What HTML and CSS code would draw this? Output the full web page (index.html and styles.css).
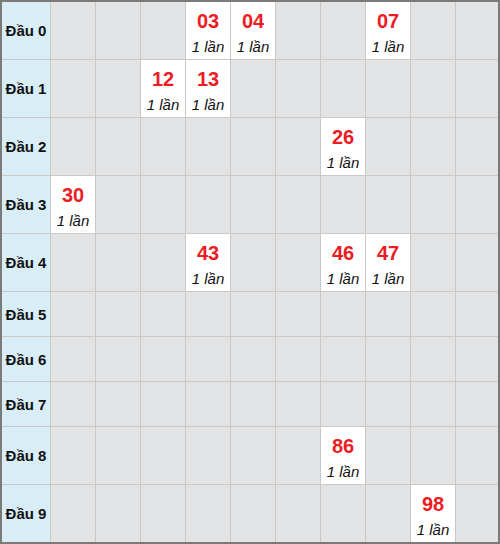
FILE: index.html
```html
<!DOCTYPE html>
<html lang="vi">
<head>
    <meta charset="UTF-8">
    <meta name="viewport" content="width=device-width, initial-scale=1.0">
    <title>Thống kê đầu lô</title>
    <link rel="stylesheet" href="styles.css">
</head>
<body>
    <div class="board">
        <div class="grid">
            <div class="head">Đầu 0</div>
            <div class="cell"></div><div class="cell"></div><div class="cell"></div>
            <div class="cell hit"><span class="num">03</span><span class="times">1 lần</span></div>
            <div class="cell hit"><span class="num">04</span><span class="times">1 lần</span></div>
            <div class="cell"></div><div class="cell"></div>
            <div class="cell hit"><span class="num">07</span><span class="times">1 lần</span></div>
            <div class="cell"></div><div class="cell"></div>

            <div class="head">Đầu 1</div>
            <div class="cell"></div><div class="cell"></div>
            <div class="cell hit"><span class="num">12</span><span class="times">1 lần</span></div>
            <div class="cell hit"><span class="num">13</span><span class="times">1 lần</span></div>
            <div class="cell"></div><div class="cell"></div><div class="cell"></div>
            <div class="cell"></div><div class="cell"></div><div class="cell"></div>

            <div class="head">Đầu 2</div>
            <div class="cell"></div><div class="cell"></div><div class="cell"></div>
            <div class="cell"></div><div class="cell"></div><div class="cell"></div>
            <div class="cell hit"><span class="num">26</span><span class="times">1 lần</span></div>
            <div class="cell"></div><div class="cell"></div><div class="cell"></div>

            <div class="head">Đầu 3</div>
            <div class="cell hit"><span class="num">30</span><span class="times">1 lần</span></div>
            <div class="cell"></div><div class="cell"></div><div class="cell"></div>
            <div class="cell"></div><div class="cell"></div><div class="cell"></div>
            <div class="cell"></div><div class="cell"></div><div class="cell"></div>

            <div class="head">Đầu 4</div>
            <div class="cell"></div><div class="cell"></div><div class="cell"></div>
            <div class="cell hit"><span class="num">43</span><span class="times">1 lần</span></div>
            <div class="cell"></div><div class="cell"></div>
            <div class="cell hit"><span class="num">46</span><span class="times">1 lần</span></div>
            <div class="cell hit"><span class="num">47</span><span class="times">1 lần</span></div>
            <div class="cell"></div><div class="cell"></div>

            <div class="head">Đầu 5</div>
            <div class="cell"></div><div class="cell"></div><div class="cell"></div>
            <div class="cell"></div><div class="cell"></div><div class="cell"></div>
            <div class="cell"></div><div class="cell"></div><div class="cell"></div>
            <div class="cell"></div>

            <div class="head">Đầu 6</div>
            <div class="cell"></div><div class="cell"></div><div class="cell"></div>
            <div class="cell"></div><div class="cell"></div><div class="cell"></div>
            <div class="cell"></div><div class="cell"></div><div class="cell"></div>
            <div class="cell"></div>

            <div class="head">Đầu 7</div>
            <div class="cell"></div><div class="cell"></div><div class="cell"></div>
            <div class="cell"></div><div class="cell"></div><div class="cell"></div>
            <div class="cell"></div><div class="cell"></div><div class="cell"></div>
            <div class="cell"></div>

            <div class="head">Đầu 8</div>
            <div class="cell"></div><div class="cell"></div><div class="cell"></div>
            <div class="cell"></div><div class="cell"></div><div class="cell"></div>
            <div class="cell hit"><span class="num">86</span><span class="times">1 lần</span></div>
            <div class="cell"></div><div class="cell"></div><div class="cell"></div>

            <div class="head">Đầu 9</div>
            <div class="cell"></div><div class="cell"></div><div class="cell"></div>
            <div class="cell"></div><div class="cell"></div><div class="cell"></div>
            <div class="cell"></div><div class="cell"></div>
            <div class="cell hit"><span class="num">98</span><span class="times">1 lần</span></div>
            <div class="cell"></div>
        </div>
    </div>
</body>
</html>
```

FILE: styles.css
```css
body {
    margin: 0;
    padding: 0;
    font-family: "Liberation Sans", Arial, sans-serif;
    background-color: #fff;
}

.board {
    width: 496px;
    border: 2px solid #7a7a7a;
}

.grid {
    display: grid;
    grid-template-columns: 48px repeat(9, 44px) 1fr;
    grid-template-rows: 57px 57px 57px 57px 57px 44px 44px 44px 57px 57px;
    gap: 1px;
    background-color: #c9c9c9;
}

.head {
    display: flex;
    align-items: center;
    justify-content: center;
    background-color: #d9edf7;
    font-size: 15px;
    font-weight: bold;
    color: #111;
}

.cell {
    background-color: #e2e3e5;
}

.hit {
    display: flex;
    flex-direction: column;
    align-items: center;
    padding-top: 7px;
    box-sizing: border-box;
    background-color: #fff;
}

.num {
    font-size: 20px;
    line-height: 24px;
    font-weight: bold;
    color: #ec1c24;
}

.times {
    margin-top: 3px;
    font-size: 15px;
    line-height: 22px;
    font-style: italic;
    color: #111;
}
```
